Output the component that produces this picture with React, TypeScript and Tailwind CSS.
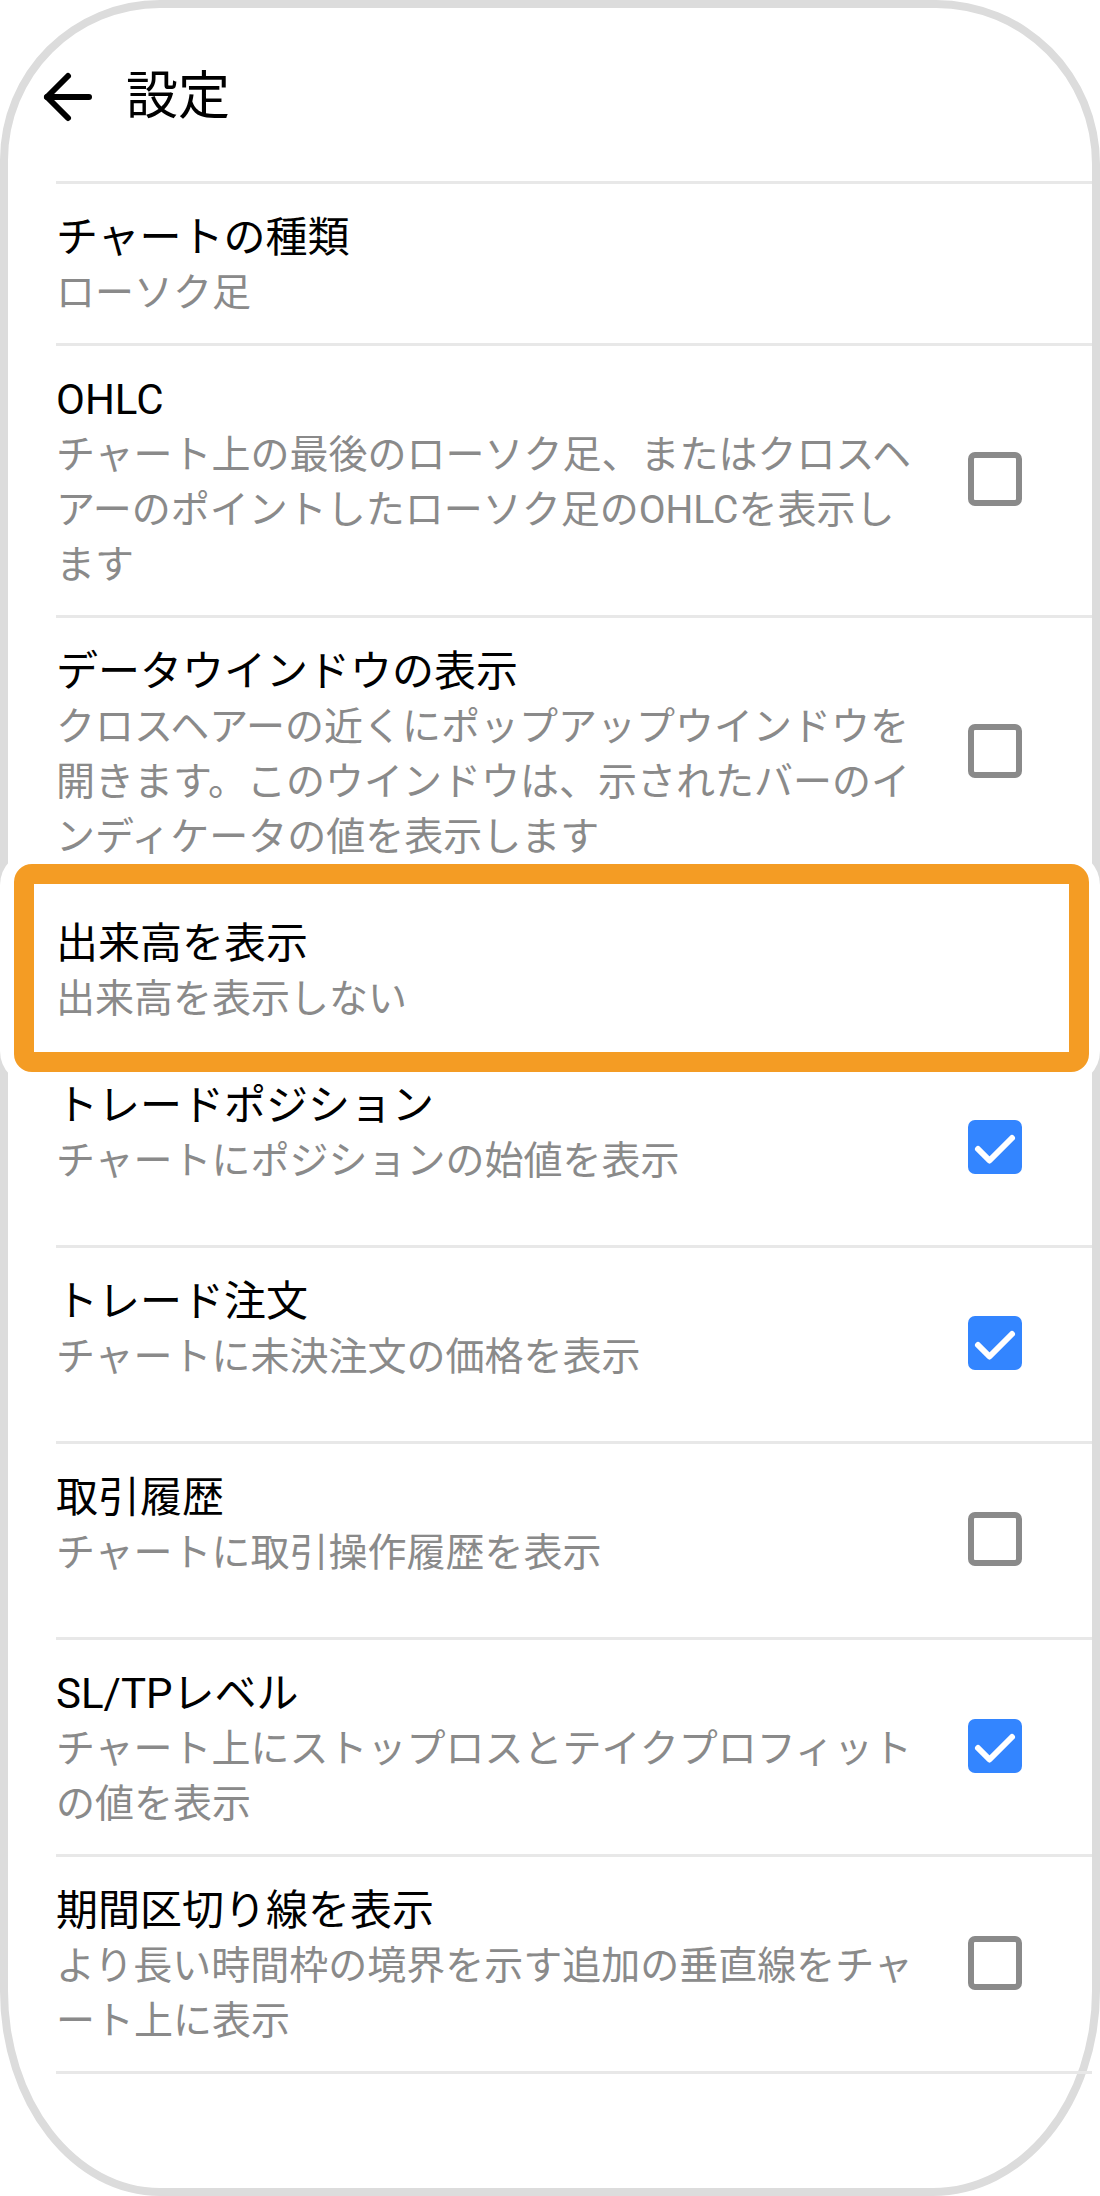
import React from 'react';

type Setting = {
  title: string;
  lines: string[];
  check?: 'on' | 'off';
  highlight?: boolean;
};

const settings: Setting[] = [
  { title: 'チャートの種類', lines: ['ローソク足'] },
  {
    title: 'OHLC',
    lines: ['チャート上の最後のローソク足、またはクロスヘ', 'アーのポイントしたローソク足のOHLCを表示し', 'ます'],
    check: 'off',
  },
  {
    title: 'データウインドウの表示',
    lines: ['クロスヘアーの近くにポップアップウインドウを', '開きます。このウインドウは、示されたバーのイ', 'ンディケータの値を表示します'],
    check: 'off',
  },
  { title: '出来高を表示', lines: ['出来高を表示しない'], highlight: true },
  { title: 'トレードポジション', lines: ['チャートにポジションの始値を表示'], check: 'on' },
  { title: 'トレード注文', lines: ['チャートに未決注文の価格を表示'], check: 'on' },
  { title: '取引履歴', lines: ['チャートに取引操作履歴を表示'], check: 'off' },
  { title: 'SL/TPレベル', lines: ['チャート上にストップロスとテイクプロフィット', 'の値を表示'], check: 'on' },
  { title: '期間区切り線を表示', lines: ['より長い時間枠の境界を示す追加の垂直線をチャ', 'ート上に表示'], check: 'off' },
];

const Checkbox: React.FC<{ checked: boolean }> = ({ checked }) =>
  checked ? (
    <div className="w-[54px] h-[54px] rounded-[7px] bg-[#3385ff] flex items-center justify-center">
      <svg width="54" height="54" viewBox="0 0 54 54" fill="none">
        <path d="M10 29l11.5 11.5L44 18" stroke="white" strokeWidth="6" strokeLinecap="round" strokeLinejoin="round" />
      </svg>
    </div>
  ) : (
    <div className="w-[54px] h-[54px] rounded-[7px] border-[6px] border-[#8a8a8a] bg-white" />
  );

const SettingRow: React.FC<{ item: Setting; last: boolean }> = ({ item, last }) => (
  <div
    className={`relative flex border-t-[3px] border-[#e8e8e8] pt-[26px] pb-[22px] pr-[70px] ${
      item.check ? 'min-h-[196px]' : ''
    } ${last ? 'border-b-[3px]' : ''}`}
  >
    {item.highlight && (
      <div className="absolute z-10 -left-[56px] -right-[8px] -top-[39px] -bottom-[36px] rounded-[34px] bg-white pt-[13px] pb-[13px] pl-[14px] pr-[11px]">
        <div className="h-full rounded-[18px] border-[20px] border-[#f49c24] bg-white" />
      </div>
    )}
    <div className="relative z-20 w-[880px] shrink-0">
      <p className="text-[42px] leading-[56px] text-black whitespace-nowrap">{item.title}</p>
      <p className="text-[39px] leading-[55px] text-[#8a8a8a] whitespace-nowrap">
        {item.lines.map((line, i) => (
          <React.Fragment key={i}>
            {i > 0 && <br />}
            {line}
          </React.Fragment>
        ))}
      </p>
    </div>
    {item.check && (
      <div className="ml-auto self-center mb-[7px]">
        <Checkbox checked={item.check === 'on'} />
      </div>
    )}
  </div>
);

export default function App() {
  return (
    <div className="w-[1100px] h-[2196px] bg-white font-[Roboto,'Noto_Sans_CJK_JP',sans-serif]">
      <div className="h-full border-[8px] border-[#dcdcdc] rounded-tl-[160px] rounded-tr-[164px] rounded-bl-[160px_205px] rounded-br-[167px_205px] bg-white">
        <header className="h-[173px] flex items-start pt-[53px] pl-[24px]">
          <svg width="72" height="72" viewBox="0 0 24 24" fill="none" stroke="black" strokeWidth="2" strokeLinecap="round" strokeLinejoin="round">
            <path d="M19 12H5" />
            <path d="M12 19l-7-7 7-7" />
          </svg>
          <h1 className="ml-[22px] text-[52px] leading-[72px] text-black">設定</h1>
        </header>

        <div className="ml-[48px]">
          {settings.map((item, i) => (
            <SettingRow key={item.title} item={item} last={i === settings.length - 1} />
          ))}
        </div>
      </div>
    </div>
  );
}
